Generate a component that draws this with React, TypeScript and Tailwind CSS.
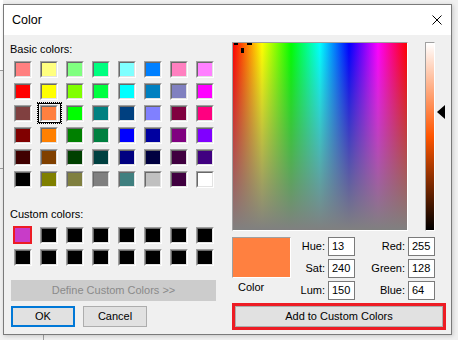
import React from 'react';

const basic: string[][] = [
  ['#FF8080', '#FFFF80', '#80FF80', '#00FF80', '#80FFFF', '#0080FF', '#FF80C0', '#FF80FF'],
  ['#FF0000', '#FFFF00', '#80FF00', '#00FF40', '#00FFFF', '#0080C0', '#8080C0', '#FF00FF'],
  ['#804040', '#FF8040', '#00FF00', '#008080', '#004080', '#8080FF', '#800040', '#FF0080'],
  ['#800000', '#FF8000', '#008000', '#008040', '#0000FF', '#0000A0', '#800080', '#8000FF'],
  ['#400000', '#804000', '#004000', '#004040', '#000080', '#000040', '#400040', '#400080'],
  ['#000000', '#808000', '#808040', '#808080', '#408080', '#C0C0C0', '#400040', '#FFFFFF'],
];

const custom: string[] = ['#C83CC8', ...Array(15).fill('#000000')];

function Swatch({ color, selected }: { color: string; selected?: boolean }) {
  return (
    <div className="relative w-[18px] h-[17px]">
      <div className="w-full h-full border border-t-[#a0a0a0] border-l-[#a0a0a0] border-b-white border-r-white">
        <div
          className="w-full h-full border border-t-[#696969] border-l-[#696969] border-b-[#e3e3e3] border-r-[#e3e3e3]"
          style={{ backgroundColor: color }}
        />
      </div>
      {selected && (
        <div className="absolute -left-[3px] -top-[3px] w-[25px] h-[22px] border border-dotted border-black">
          <div className="w-full h-full border border-black" />
        </div>
      )}
    </div>
  );
}

function CustomSwatch({ color, selected }: { color: string; selected?: boolean }) {
  if (selected) {
    return (
      <div className="w-[18px] h-[17px] relative">
        <div className="absolute -left-px -top-px w-[19px] h-[18px] border-2 border-[#ed1c24]" style={{ backgroundColor: color }} />
      </div>
    );
  }
  return <Swatch color={color} />;
}

function Field({ label, value, labelW }: { label: string; value: string; labelW: 'a' | 'b' }) {
  return (
    <div className="flex items-center h-[19px]">
      <div className={labelW === 'a' ? 'w-[34px] text-right' : 'w-[50px] text-right'}>{label}</div>
      <div className="ml-[3px] w-[27px] h-[19px] border border-[#7a7a7a] bg-white pl-[3px] leading-[17px]">{value}</div>
    </div>
  );
}

export default function App() {
  return (
    <div className="relative w-[458px] h-[340px] overflow-hidden bg-[#f0f0f0] font-['Liberation_Sans',Arial,sans-serif] text-[11px] text-black">
      {/* window behind */}
      <div className="absolute left-0 top-0 w-[3px] h-[70px] bg-white" />
      <div className="absolute left-0 top-[70px] w-[3px] h-px bg-[#a0a0a0]" />
      <div className="absolute left-0 top-[168px] w-[3px] h-px bg-[#a0a0a0]" />
      <div className="absolute left-[43px] top-[334px] w-px h-[6px] bg-[#a0a0a0]" />

      <div className="absolute left-[3px] top-[4px] w-[449px] h-[331px] border border-[#7a7a7a] bg-[#f0f0f0] shadow-[1px_1px_4px_rgba(0,0,0,0.18)] flex flex-col">
        <div className="h-[30px] shrink-0 bg-white flex items-center justify-between pl-[8px] pr-[9px]">
          <span className="text-[12.5px]">Color</span>
          <svg width="10" height="10" viewBox="0 0 10 10">
            <path d="M0.5 0.5 L9.5 9.5 M9.5 0.5 L0.5 9.5" stroke="#000" strokeWidth="1" />
          </svg>
        </div>

        <div className="flex flex-1">
          {/* left column */}
          <div className="w-[228px] shrink-0 flex flex-col pt-[7px]">
            <div className="ml-[6px] h-[14px] leading-[14px]">Basic colors:</div>
            <div className="ml-[10px] mt-[5px] grid grid-cols-[repeat(8,18px)] gap-x-[8px] gap-y-[5px]">
              {basic.map((row, r) =>
                row.map((c, i) => <Swatch key={`${r}-${i}`} color={c} selected={r === 2 && i === 1} />)
              )}
            </div>
            <div className="ml-[6px] mt-[19px] h-[14px] leading-[14px]">Custom colors:</div>
            <div className="ml-[10px] mt-[6px] grid grid-cols-[repeat(8,18px)] gap-x-[8px] gap-y-[5px]">
              {custom.map((c, i) => (
                <CustomSwatch key={i} color={c} selected={i === 0} />
              ))}
            </div>
            <div className="ml-[7px] mt-[14px] w-[205px] h-[21px] bg-[#cccccc] text-[#8a8a8a] flex items-center justify-center">
              Define Custom Colors &gt;&gt;
            </div>
            <div className="ml-[7px] mt-[5px] flex gap-[8px]">
              <div className="w-[64px] h-[21px] border-2 border-[#0078d7] bg-[#e1e1e1] flex items-center justify-center">OK</div>
              <div className="w-[64px] h-[21px] border border-[#adadad] bg-[#e1e1e1] flex items-center justify-center">Cancel</div>
            </div>
          </div>

          {/* right column */}
          <div className="flex flex-col pt-[7px]">
            <div className="flex items-start">
              <div className="relative w-[176px] h-[189px] border border-t-[#a0a0a0] border-l-[#a0a0a0] border-b-white border-r-white">
                <div className="w-full h-full bg-[linear-gradient(to_bottom,rgba(128,128,128,0),#808080),linear-gradient(to_right,#ff0000,#ffff00,#00ff00,#00ffff,#0000ff,#ff00ff,#ff0000)]" />
                <svg className="absolute -left-px -top-px" width="24" height="14" viewBox="0 0 24 14">
                  <rect x="2" y="1" width="4" height="2" fill="#000" />
                  <rect x="15" y="1" width="5" height="2" fill="#000" />
                  <rect x="9" y="6" width="3" height="5" fill="#000" />
                </svg>
              </div>
              <div className="relative ml-[17px]">
                <div className="w-[10px] h-[189px] border border-t-[#a0a0a0] border-l-[#a0a0a0] border-b-white border-r-white">
                  <div className="w-full h-full bg-[linear-gradient(to_bottom,#ffffff,#ff5500_50%,#000000)]" />
                </div>
                <svg className="absolute left-[12px] top-[63px]" width="8" height="14" viewBox="0 0 8 14">
                  <path d="M0 7 L8 0 L8 14 Z" fill="#000" />
                </svg>
              </div>
            </div>

            <div className="mt-[6px] flex">
              <div className="w-[59px] flex flex-col">
                <div className="w-[59px] h-[41px] border border-t-[#a0a0a0] border-l-[#a0a0a0] border-b-white border-r-white bg-[#ff8040]" />
                <div className="ml-[6px] mt-[2px] h-[14px] leading-[14px]">Color</div>
              </div>
              <div className="flex flex-col gap-[3px]">
                <Field label="Hue:" value="13" labelW="a" />
                <Field label="Sat:" value="240" labelW="a" />
                <Field label="Lum:" value="150" labelW="a" />
              </div>
              <div className="flex flex-col gap-[3px]">
                <Field label="Red:" value="255" labelW="b" />
                <Field label="Green:" value="128" labelW="b" />
                <Field label="Blue:" value="64" labelW="b" />
              </div>
            </div>

            <div className="mt-[3px] w-[214px] h-[27px] border-[3px] border-[#ed1c24]">
              <div className="w-full h-full border border-[#adadad] bg-[#e1e1e1] flex items-center justify-center">
                Add to Custom Colors
              </div>
            </div>
          </div>
        </div>
      </div>
    </div>
  );
}
